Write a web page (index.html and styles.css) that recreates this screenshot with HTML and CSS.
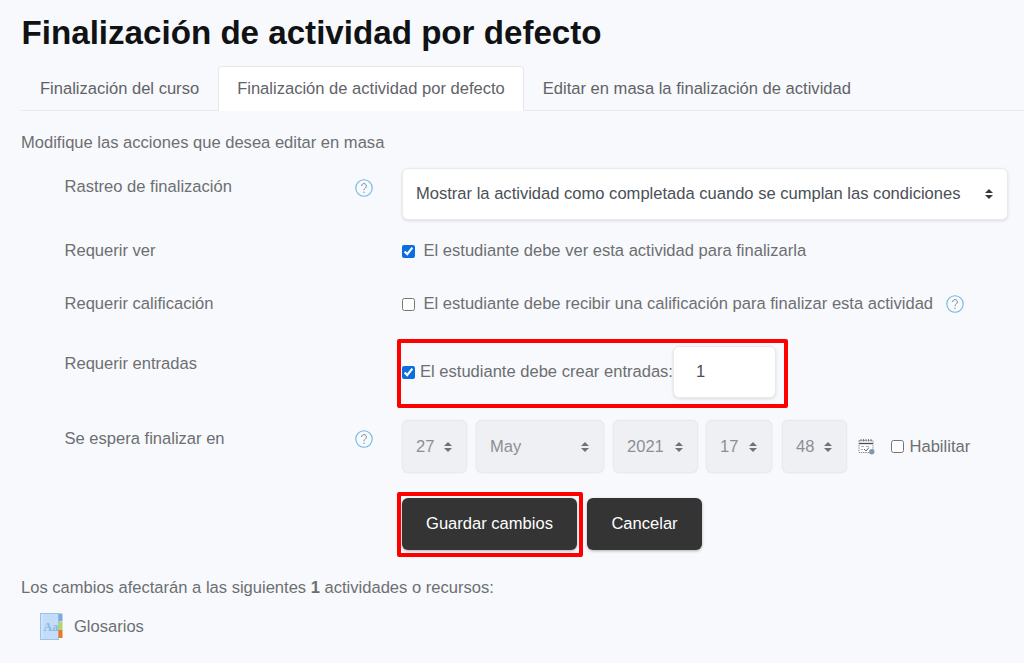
FILE: index.html
```html
<!DOCTYPE html>
<html lang="es">
<head>
<meta charset="utf-8">
<title>Finalización de actividad por defecto</title>
<link rel="stylesheet" href="styles.css">
</head>
<body>
<h1 class="title">Finalización de actividad por defecto</h1>
<nav class="tabs">
  <a class="tab">Finalización del curso</a>
  <a class="tab active">Finalización de actividad por defecto</a>
  <a class="tab">Editar en masa la finalización de actividad</a>
</nav>
<p class="intro">Modifique las acciones que desea editar en masa</p>
<form class="form">
  <div class="row row-track">
    <label class="label">Rastreo de finalización</label>
    <span class="help-slot"><svg class="help" viewBox="0 0 18 18"><circle class="help-ring" cx="9" cy="9" r="8.2"/><path d="M6.6 7a2.4 2.4 0 1 1 3.7 2c-.9.6-1.3 1-1.3 2.2"/><path d="M9 12.6v1.4"/></svg></span>
    <div class="field"><select class="select select-wide"><option>Mostrar la actividad como completada cuando se cumplan las condiciones</option></select></div>
  </div>
  <div class="row row-view">
    <label class="label">Requerir ver</label>
    <span class="help-slot"></span>
    <div class="field"><input class="check" type="checkbox" checked><span class="check-text">El estudiante debe ver esta actividad para finalizarla</span></div>
  </div>
  <div class="row row-grade">
    <label class="label">Requerir calificación</label>
    <span class="help-slot"></span>
    <div class="field"><input class="check" type="checkbox"><span class="check-text">El estudiante debe recibir una calificación para finalizar esta actividad</span>
      <svg class="help help-inline" viewBox="0 0 18 18"><circle class="help-ring" cx="9" cy="9" r="8.2"/><path d="M6.6 7a2.4 2.4 0 1 1 3.7 2c-.9.6-1.3 1-1.3 2.2"/><path d="M9 12.6v1.4"/></svg></div>
  </div>
  <div class="row row-entries">
    <label class="label">Requerir entradas</label>
    <span class="help-slot"></span>
    <div class="field"><input class="check" type="checkbox" checked><span class="check-text tight">El estudiante debe crear entradas:</span><input class="number" type="text" value="1"></div>
    <span class="mark mark-entries"></span>
  </div>
  <div class="row row-date">
    <label class="label">Se espera finalizar en</label>
    <span class="help-slot"><svg class="help" viewBox="0 0 18 18"><circle class="help-ring" cx="9" cy="9" r="8.2"/><path d="M6.6 7a2.4 2.4 0 1 1 3.7 2c-.9.6-1.3 1-1.3 2.2"/><path d="M9 12.6v1.4"/></svg></span>
    <div class="field date">
      <select class="select small w65" disabled><option>27</option></select>
      <select class="select small w128" disabled><option>May</option></select>
      <select class="select small w85 gap-8" disabled><option>2021</option></select>
      <select class="select small w66 gap-10" disabled><option>17</option></select>
      <select class="select small w65 last" disabled><option>48</option></select>
      <svg class="cal" viewBox="0 0 17 17"><rect x="1" y="2.500" width="14" height="12" fill="#fff" stroke="#8a8e92" stroke-dasharray="1.5 .8"/><path d="M1 5.500h14" stroke="#4d5154" stroke-width="1.4"/><path d="M3 1v2.500M5.500 1v2.500M8 1v2.500M10.500 1v2.500M13 1v2.500" stroke="#777"/><path d="M3 8.500h3M8 8.500h3M3 11.500h2" stroke="#aaa"/><path d="M6 11l2 2 3-3.500" fill="none" stroke="#666"/><circle cx="13.800" cy="13.800" r="2.700" fill="#7d9ab0"/></svg>
      <input class="check check-enable" type="checkbox"><span class="enable">Habilitar</span>
    </div>
  </div>
  <div class="row row-actions">
    <span class="label"></span>
    <span class="help-slot"></span>
    <div class="field actions">
      <button class="btn btn-save" type="button">Guardar cambios</button>
      <button class="btn btn-cancel" type="button">Cancelar</button>
    </div>
    <span class="mark mark-save"></span>
  </div>
</form>
<p class="note">Los cambios afectarán a las siguientes <strong>1</strong> actividades o recursos:</p>
<div class="module">
  <svg class="module-icon" viewBox="0 0 23 27"><rect x="0.5" y="0.5" width="18" height="26" fill="#c3dcf7" stroke="#98c4ee"/><path d="M2 1v25" stroke="#dbeafa"/><rect x="18.500" y="0.500" width="4" height="8" fill="#7fa9d8"/><rect x="18.500" y="9" width="4" height="8" fill="#b4d66a"/><rect x="18.500" y="17" width="4" height="8" fill="#e8792b"/><text x="3.500" y="18" class="module-aa">Aa</text></svg>
  <span>Glosarios</span>
</div>
</body>
</html>
```
FILE: styles.css
```css
* { box-sizing: border-box; }
html, body { height: 100%; }
body {
  margin: 0;
  padding: 0 0 0 21px;
  background: #f8f9fc;
  color: #6c6f72;
  font-family: "Liberation Sans", Arial, sans-serif;
  font-size: 16.56px;
  line-height: 24px;
  overflow: hidden;
}
.title {
  margin: 0;
  padding: 13px 0 0 0.5px;
  height: 66px;
  color: #101214;
  font-size: 33.15px;
  line-height: 40px;
  font-weight: 700;
}
.tabs {
  display: flex;
  height: 45px;
  border-bottom: 1.5px solid #e9ecef;
}
.tab {
  padding: 11px 19px 0;
  height: 45px;
  color: #5f6368;
}
.active {
  background: #fff;
  border: 1px solid #e6e8ec;
  border-bottom: 0;
  border-radius: 4px 4px 0 0;
  padding-top: 10px;
  padding-left: 18px;
  padding-right: 18px;
}
.intro { margin: 20px 0 0; height: 24px; }
.form { margin-top: 13px; }
.row { display: flex; position: relative; align-items: flex-start; }
.label { width: 290px; padding-left: 43.5px; flex: none; }
.help-slot { width: 91px; flex: none; display: flex; padding-left: 44px; }
.help { width: 18px; height: 18px; fill: none; stroke: #6f8fa3; stroke-width: 1; }
.help-ring { stroke: #6fb6dc; stroke-width: 1.1; }
.field { display: flex; align-items: center; }
.row-track { height: 52px; }
.row-track .label { padding-top: 7px; }
.row-track .help-slot { padding-top: 11px; }
.row-view { margin-top: 19px; height: 24px; }
.row-grade { margin-top: 29px; height: 24px; }
.row-entries { margin-top: 30px; height: 74px; }
.row-entries .label { padding-top: 6px; }
.row-date { height: 53px; }
.row-date .label { padding-top: 7px; }
.row-date .help-slot { padding-top: 10px; }
.select {
  appearance: none;
  height: 52px;
  width: 606px;
  padding: 0 13px;
  border: 1px solid #e8eaee;
  border-radius: 6px;
  box-shadow: 0 1px 3px rgba(0,0,0,.12);
  color: #495057;
  font: inherit;
  background: #fff url("data:image/svg+xml,%3Csvg xmlns='http://www.w3.org/2000/svg' width='10' height='12'%3E%3Cpath d='M1 5l4-4 4 4zM1 7l4 4 4-4z' fill='%23343a40'/%3E%3C/svg%3E") no-repeat right 13px center;
}
.small {
  height: 53px;
  background-color: #eff0f4;
  color: #8b8f94;
  opacity: 1;
  box-shadow: 0 0 2px rgba(0,0,0,.08);
  margin-right: 9px;
}
.small[disabled] { background-image: url("data:image/svg+xml,%3Csvg xmlns='http://www.w3.org/2000/svg' width='10' height='12'%3E%3Cpath d='M1 5l4-4 4 4zM1 7l4 4 4-4z' fill='%236f7378'/%3E%3C/svg%3E"); }
.w65 { width: 65px; }
.w66 { width: 66px; }
.w85 { width: 85px; }
.w128 { width: 128px; }
.gap-8 { margin-right: 8px; }
.gap-10 { margin-right: 10px; }
.date { height: 53px; }
.last { margin-right: 11px; }
.cal { width: 17px; height: 17px; flex: none; margin-right: 16px; }
.check { width: 13px; height: 13px; margin: 0; flex: none; accent-color: #0a6ee0; }
.check-text { margin-left: 8.5px; }
.tight { margin-left: 5px; }
.check-enable { margin-right: 5.5px; }
.help-inline { margin-left: 13px; }
.number {
  width: 103px;
  height: 52px;
  margin-left: 0;
  padding: 0 22px;
  border: 1px solid #e8eaee;
  border-radius: 6px;
  background: #fff;
  box-shadow: 0 1px 3px rgba(0,0,0,.12);
  color: #495057;
  font: inherit;
}
.actions { gap: 9px; }
.row-actions { margin-top: 25px; height: 52px; }
.btn {
  height: 52px;
  border: 0;
  border-radius: 6px;
  background: #343434;
  color: #fff;
  font: inherit;
  box-shadow: 0 1px 3px rgba(0,0,0,.3);
}
.btn-save { width: 175px; }
.btn-cancel { width: 115px; margin-left: 1px; }
.mark {
  position: absolute;
  border: 4px solid #ff0000;
  border-radius: 2px;
  pointer-events: none;
}
.mark-entries { left: 376px; top: -7px; width: 391px; height: 69px; }
.mark-save { left: 376px; top: -6px; width: 186px; height: 65px; }
.note { margin: 26px 0 0; }
.module { display: flex; align-items: center; margin: 13px 0 0 19px; height: 27px; gap: 11px; }
.module-icon { width: 23px; height: 27px; flex: none; }
.module-aa { font-family: "Liberation Serif", serif; font-size: 12px; font-weight: 700; fill: #8ab8e0; }
```
